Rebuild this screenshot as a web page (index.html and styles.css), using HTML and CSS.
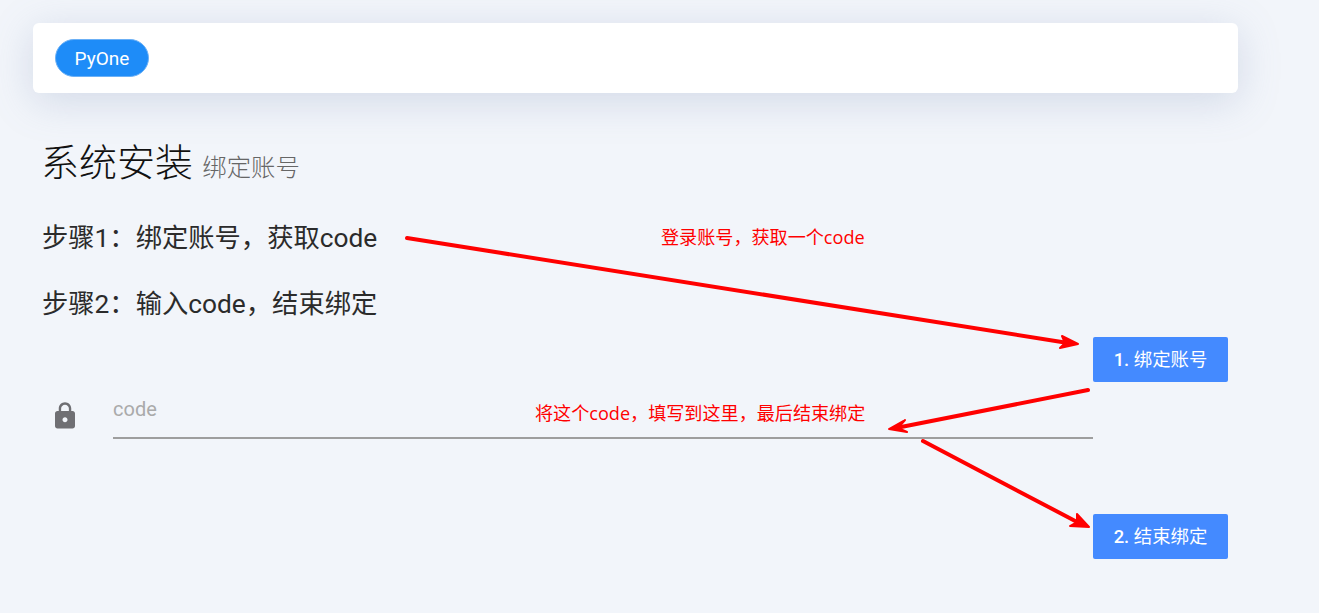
FILE: index.html
```html
<!DOCTYPE html>
<html lang="zh-CN">
<head>
  <meta charset="UTF-8">
  <title>系统安装</title>
  <link rel="stylesheet" href="styles.css">
</head>
<body>

  <nav class="navbar">
    <a class="brand">PyOne</a>
  </nav>

  <main class="content">
    <h1 class="title">系统安装 <small>绑定账号</small></h1>
    <p class="step">步骤1：绑定账号，获取code</p>
    <p class="step">步骤2：输入code，结束绑定</p>

    <form class="bind-form">
      <button type="button" class="btn"><b>1.</b> 绑定账号</button>
      <div class="field">
        <svg class="field-icon" viewBox="0 0 24 24" width="30" height="30">
          <path d="M18 8h-1V6c0-2.76-2.24-5-5-5S7 3.24 7 6v2H6c-1.1 0-2 .9-2 2v10c0 1.1.9 2 2 2h12c1.1 0 2-.9 2-2V10c0-1.1-.9-2-2-2zm-6 9c-1.1 0-2-.9-2-2s.9-2 2-2 2 .9 2 2-.9 2-2 2zm3.1-9H8.9V6c0-1.71 1.39-3.1 3.1-3.1 1.71 0 3.1 1.39 3.1 3.1v2z"/>
        </svg>
        <input class="field-input" type="text" placeholder="code">
      </div>
      <button type="button" class="btn btn-finish"><b>2.</b> 结束绑定</button>
    </form>
  </main>

  <!-- red notes drawn on top of the screenshot -->
  <svg class="arrows" width="1319" height="613" viewBox="0 0 1319 613">
    <g class="arrow-line">
      <line x1="407" y1="238" x2="1068" y2="343"/>
      <line x1="1088" y1="390" x2="896" y2="428"/>
      <line x1="923" y1="441" x2="1079" y2="523"/>
    </g>
    <g class="arrow-head">
      <polygon points="1078,344 1062,336 1065,343 1060,348"/>
      <polygon points="889,429 905,420 898,428 907,432"/>
      <polygon points="1089,527 1077,514 1077,522 1070,526"/>
    </g>
  </svg>
  <span class="note note-login">登录账号，获取一个code</span>
  <span class="note note-fill">将这个code，填写到这里，最后结束绑定</span>

</body>
</html>
```

FILE: styles.css
```css
:root {
  --bg-color: #f2f5fa;
  --text-color: #2b2b2b;
  --brand-color: #1e8cf8;
  --button-bg: #448aff;
}

* {
  box-sizing: border-box;
}

html, body {
  height: 100%;
}

body {
  margin: 0;
  padding: 23px 81px 0 33px;
  position: relative;
  overflow: hidden;
  background: var(--bg-color);
  color: var(--text-color);
  font-family: Roboto, "Noto Sans CJK SC", sans-serif;
}

.navbar {
  height: 70px;
  padding: 16px 22px;
  background: #fff;
  border-radius: 6px;
  box-shadow: 0 8px 40px rgba(120, 140, 180, 0.26);
}

.brand {
  display: inline-flex;
  align-items: center;
  justify-content: center;
  width: 94px;
  height: 38px;
  border: 1px solid #6bb0f6;
  border-radius: 19px;
  background: var(--brand-color);
  color: #fff;
  font-size: 19px;
}

.content {
  padding: 44px 10px 0;
}

.title {
  margin: 0 0 0 -2px;
  padding-bottom: 1px;
  color: #111;
  font-size: 38px;
  font-weight: 300;
  line-height: 53px;
}

.title small {
  color: #666;
  font-size: 24.4px;
}

.step {
  margin: 21px 0 0 -1px;
  font-size: 26.3px;
  line-height: 45px;
}

.bind-form {
  display: flex;
  flex-direction: column;
  margin-top: 10px;
}

.btn {
  align-self: flex-end;
  width: 135px;
  height: 45px;
  padding: 0 0 3px;
  border: none;
  border-radius: 2px;
  background: var(--button-bg);
  color: #fff;
  font-family: inherit;
  font-size: 18.4px;
}

.btn b {
  font-weight: 500;
}

.field {
  display: flex;
  align-items: flex-start;
  width: 1050px;
  height: 57px;
}

.field-icon {
  flex: none;
  margin: 19px 33px 0 7px;
  fill: #6f6f73;
}

.field-input {
  flex: 1;
  height: 57px;
  padding: 0 0 1px;
  border: none;
  border-bottom: 2px solid #9e9e9e;
  outline: none;
  background: transparent;
  font-family: inherit;
  font-size: 20px;
}

.field-input::placeholder {
  color: #aaa;
}

.btn-finish {
  margin-top: 75px;
}

.arrows {
  position: absolute;
  top: 0;
  left: 0;
  pointer-events: none;
}

.arrow-line line {
  stroke: #f00;
  stroke-width: 4;
  stroke-linecap: round;
}

.arrow-head polygon {
  fill: #f00;
  stroke: #f00;
  stroke-width: 2;
  stroke-linejoin: round;
}

.note {
  position: absolute;
  color: #f00;
  font-family: "Open Sans", "Noto Sans CJK SC", sans-serif;
  font-size: 18.1px;
  line-height: 24px;
  white-space: nowrap;
}

.note-login {
  top: 225px;
  left: 661px;
}

.note-fill {
  top: 401px;
  left: 535px;
}
```
